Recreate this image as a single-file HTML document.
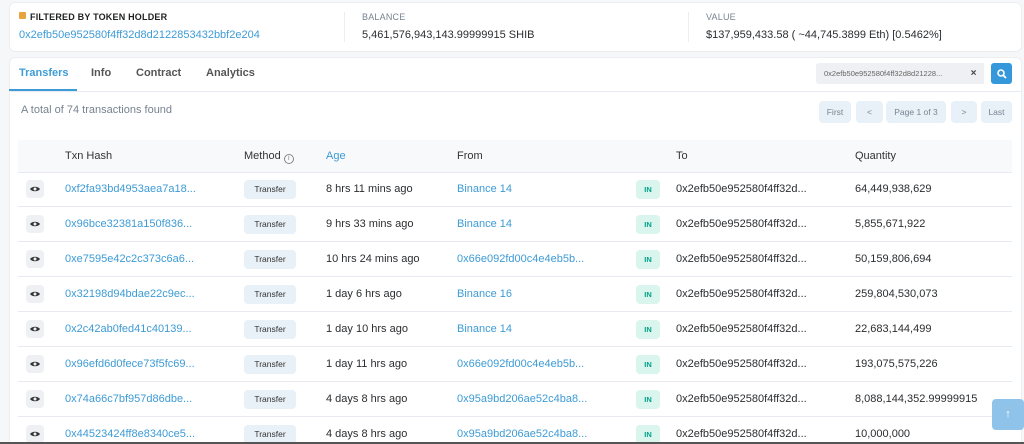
<!DOCTYPE html>
<html style="width:1024px;height:444px;overflow:hidden"><head><meta charset="utf-8"><style>
*{margin:0;padding:0;box-sizing:border-box}
body{width:1024px;height:444px;overflow:hidden;background:#f6f7f9;font-family:"Liberation Sans",sans-serif;color:#2b2d30;position:relative}
.card{position:absolute;background:#fff;border-radius:6px;border:1px solid #eceef1}
.a{position:absolute;white-space:nowrap}
.lbl{font-size:9px;color:#77838f;letter-spacing:.2px}
.link{color:#3d9bd6}
.row{position:absolute;left:18px;width:994px;height:35px;border-bottom:1px solid #e7eaf3}
.row div{position:absolute;top:11px;font-size:11px;white-space:nowrap}
.eye{left:8px!important;top:8px!important;width:18px;height:18px;background:#eef0f3;border-radius:4px}
.tr{left:226px!important;top:8px!important;width:52px;height:19px;background:#e8f1f8;border-radius:4px;font-size:8.5px!important;text-align:center;line-height:19px;color:#333}
.in{left:618px!important;top:8px!important;width:24px;height:19px;background:#d9f5ee;border-radius:4px;font-size:7.5px!important;font-weight:bold;text-align:center;line-height:19px;color:#00a186}
.pb{position:absolute;top:101px;height:22px;background:#e8f1f8;border-radius:4px;font-size:8.5px;color:#77838f;text-align:center;line-height:22px}
</style></head><body>
<svg width="0" height="0" style="position:absolute"><defs><g id="e"><path d="M4 9c2-3 8-3 10 0c-2 3-8 3-10 0z" fill="#333"/><circle cx="9" cy="9" r="1.5" fill="#eef0f3"/></g></defs></svg>
<div class="card" style="left:9px;top:2px;width:1013px;height:50px"></div>
<div class="a" style="left:19px;top:12px;width:7px;height:7px;background:#e8a33d;border-radius:1px"></div>
<div class="a lbl" style="left:30px;top:12px;font-weight:bold;color:#1e2022">FILTERED BY TOKEN HOLDER</div>
<div class="a link" style="left:19px;top:29px;font-size:11px">0x2efb50e952580f4ff32d8d2122853432bbf2e204</div>
<div class="a" style="left:344px;top:12px;width:1px;height:30px;background:#eee"></div>
<div class="a lbl" style="left:362px;top:12px">BALANCE</div>
<div class="a" style="left:362px;top:29px;font-size:11px">5,461,576,943,143.99999915 SHIB</div>
<div class="a" style="left:688px;top:12px;width:1px;height:30px;background:#eee"></div>
<div class="a lbl" style="left:706px;top:12px">VALUE</div>
<div class="a" style="left:706px;top:29px;font-size:11px">$137,959,433.58 ( ~44,745.3899 Eth) [0.5462%]</div>

<div class="card" style="left:9px;top:57px;width:1013px;height:400px"></div>
<div class="a" style="left:9px;top:91px;width:1013px;height:1px;background:#e7eaf3"></div>
<div class="a" style="left:19px;top:67px;font-size:11px;font-weight:bold;color:#3d9bd6">Transfers</div>
<div class="a" style="left:9px;top:89px;width:68px;height:2px;background:#3d9bd6"></div>
<div class="a" style="left:91px;top:67px;font-size:11px;font-weight:bold;color:#555">Info</div>
<div class="a" style="left:136px;top:67px;font-size:11px;font-weight:bold;color:#555">Contract</div>
<div class="a" style="left:206px;top:67px;font-size:11px;font-weight:bold;color:#555">Analytics</div>
<div class="a" style="left:816px;top:63px;width:147px;height:21px;background:#eef0f3;border-radius:3px 0 0 3px;font-size:7.5px;color:#666;line-height:21px;padding-left:8px">0x2efb50e952580f4ff32d8d21228...</div>
<div class="a" style="left:963px;top:63px;width:21px;height:21px;background:#eef0f3;font-size:10px;text-align:center;line-height:21px;color:#444;font-weight:bold">×</div>
<div class="a" style="left:991px;top:63px;width:21px;height:21px;background:#3498db;border-radius:3px"><svg width="21" height="21"><circle cx="10" cy="10" r="3" fill="none" stroke="#fff" stroke-width="1.6"/><path d="M12 12l3 3" stroke="#fff" stroke-width="1.8"/></svg></div>
<div class="a" style="left:21px;top:104px;font-size:11px;color:#77838f">A total of 74 transactions found</div>
<div class="pb" style="left:819px;width:32px">First</div>
<div class="pb" style="left:856px;width:27px">&lt;</div>
<div class="pb" style="left:886px;width:60px">Page 1 of 3</div>
<div class="pb" style="left:951px;width:26px">&gt;</div>
<div class="pb" style="left:981px;width:31px">Last</div>

<div class="a" style="left:18px;top:140px;width:994px;height:33px;background:#f8f9fa;border-bottom:1px solid #e7eaf3"></div>
<div class="a" style="left:65px;top:150px;font-size:11px;color:#333">Txn Hash</div>
<div class="a" style="left:244px;top:150px;font-size:11px;color:#333">Method <span style="display:inline-block;width:10px;height:10px;border:1px solid #888;border-radius:50%;font-size:7px;line-height:8px;text-align:center;vertical-align:-1px;color:#888">i</span></div>
<div class="a" style="left:326px;top:150px;font-size:11px;color:#3d9bd6">Age</div>
<div class="a" style="left:457px;top:150px;font-size:11px;color:#333">From</div>
<div class="a" style="left:676px;top:150px;font-size:11px;color:#333">To</div>
<div class="a" style="left:855px;top:150px;font-size:11px;color:#333">Quantity</div>

<div class="row" style="top:172px"><div class="eye"><svg width="18" height="18"><use href="#e"/></svg></div><div class="link" style="left:47px">0xf2fa93bd4953aea7a18...</div><div class="tr">Transfer</div><div style="left:308px">8 hrs 11 mins ago</div><div class="link" style="left:439px">Binance 14</div><div class="in">IN</div><div style="left:658px">0x2efb50e952580f4ff32d...</div><div style="left:837px">64,449,938,629</div></div>
<div class="row" style="top:207px"><div class="eye"><svg width="18" height="18"><use href="#e"/></svg></div><div class="link" style="left:47px">0x96bce32381a150f836...</div><div class="tr">Transfer</div><div style="left:308px">9 hrs 33 mins ago</div><div class="link" style="left:439px">Binance 14</div><div class="in">IN</div><div style="left:658px">0x2efb50e952580f4ff32d...</div><div style="left:837px">5,855,671,922</div></div>
<div class="row" style="top:242px"><div class="eye"><svg width="18" height="18"><use href="#e"/></svg></div><div class="link" style="left:47px">0xe7595e42c2c373c6a6...</div><div class="tr">Transfer</div><div style="left:308px">10 hrs 24 mins ago</div><div class="link" style="left:439px">0x66e092fd00c4e4eb5b...</div><div class="in">IN</div><div style="left:658px">0x2efb50e952580f4ff32d...</div><div style="left:837px">50,159,806,694</div></div>
<div class="row" style="top:277px"><div class="eye"><svg width="18" height="18"><use href="#e"/></svg></div><div class="link" style="left:47px">0x32198d94bdae22c9ec...</div><div class="tr">Transfer</div><div style="left:308px">1 day 6 hrs ago</div><div class="link" style="left:439px">Binance 16</div><div class="in">IN</div><div style="left:658px">0x2efb50e952580f4ff32d...</div><div style="left:837px">259,804,530,073</div></div>
<div class="row" style="top:312px"><div class="eye"><svg width="18" height="18"><use href="#e"/></svg></div><div class="link" style="left:47px">0x2c42ab0fed41c40139...</div><div class="tr">Transfer</div><div style="left:308px">1 day 10 hrs ago</div><div class="link" style="left:439px">Binance 14</div><div class="in">IN</div><div style="left:658px">0x2efb50e952580f4ff32d...</div><div style="left:837px">22,683,144,499</div></div>
<div class="row" style="top:347px"><div class="eye"><svg width="18" height="18"><use href="#e"/></svg></div><div class="link" style="left:47px">0x96efd6d0fece73f5fc69...</div><div class="tr">Transfer</div><div style="left:308px">1 day 11 hrs ago</div><div class="link" style="left:439px">0x66e092fd00c4e4eb5b...</div><div class="in">IN</div><div style="left:658px">0x2efb50e952580f4ff32d...</div><div style="left:837px">193,075,575,226</div></div>
<div class="row" style="top:382px"><div class="eye"><svg width="18" height="18"><use href="#e"/></svg></div><div class="link" style="left:47px">0x74a66c7bf957d86dbe...</div><div class="tr">Transfer</div><div style="left:308px">4 days 8 hrs ago</div><div class="link" style="left:439px">0x95a9bd206ae52c4ba8...</div><div class="in">IN</div><div style="left:658px">0x2efb50e952580f4ff32d...</div><div style="left:837px">8,088,144,352.99999915</div></div>
<div class="row" style="top:417px;border:none"><div class="eye"><svg width="18" height="18"><use href="#e"/></svg></div><div class="link" style="left:47px">0x44523424ff8e8340ce5...</div><div class="tr">Transfer</div><div style="left:308px">4 days 8 hrs ago</div><div class="link" style="left:439px">0x95a9bd206ae52c4ba8...</div><div class="in">IN</div><div style="left:658px">0x2efb50e952580f4ff32d...</div><div style="left:837px">10,000,000</div></div>

<div class="a" style="left:992px;top:399px;width:32px;height:31px;background:#8fc3ea;border-radius:4px;color:#fff;font-size:11px;text-align:center;line-height:31px;font-weight:bold">↑</div>
<div class="a" style="left:0;top:442px;width:1024px;height:2px;background:#555"></div>
</body></html>
